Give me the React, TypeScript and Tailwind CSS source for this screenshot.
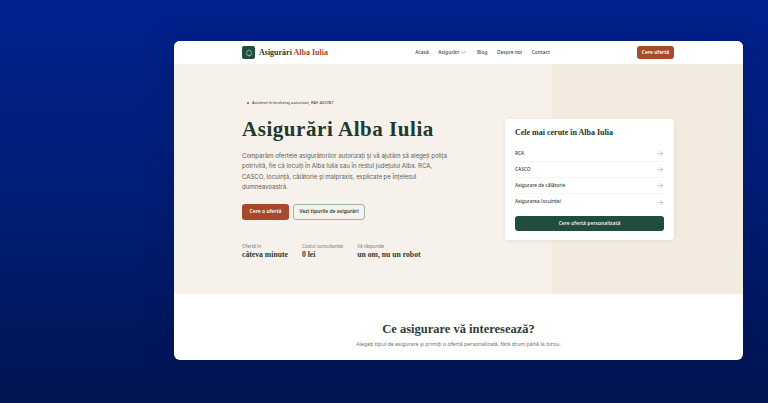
import { ArrowRight, ChevronDown, TreeDeciduous } from "lucide-react";

const serif = "font-['Liberation_Serif',serif]";

const navLinks = ["Acasă", "Blog", "Despre noi", "Contact"];
const popular = ["RCA", "CASCO", "Asigurare de călătorie", "Asigurarea locuinței"];
const stats = [
  { label: "Ofertă în", value: "câteva minute" },
  { label: "Costul consultanței", value: "0 lei" },
  { label: "Vă răspunde", value: "un om, nu un robot" },
];

function Nav() {
  return (
    <header className="flex h-[23px] shrink-0 items-center justify-between bg-white pl-[68px] pr-[69px]">
      <div className="flex items-center gap-[4px]">
        <div className="flex h-[13px] w-[13px] items-center justify-center rounded-[2px] bg-[#1f4d3f] text-white">
          <TreeDeciduous size={8} strokeWidth={1.5} />
        </div>
        <span className={`${serif} text-[8px] font-bold leading-none text-[#1f3a30]`}>
          Asigurări <span className="text-[#a8492b]">Alba Iulia</span>
        </span>
      </div>
      <nav className="flex items-center gap-[9.5px] text-[4.9px] font-medium text-[#3d4a44]">
        <span>{navLinks[0]}</span>
        <span className="flex items-center gap-[1px]">
          Asigurări <ChevronDown size={7} strokeWidth={1.6} />
        </span>
        {navLinks.slice(1).map((l) => (
          <span key={l}>{l}</span>
        ))}
      </nav>
      <button className="flex h-[13px] w-[37px] items-center justify-center rounded-[3px] bg-[#a8492b] text-[5px] font-semibold text-white">
        Cere ofertă
      </button>
    </header>
  );
}

function Hero() {
  return (
    <section className="flex h-[230px] shrink-0 items-start justify-between bg-[linear-gradient(to_right,#f6f1ea_0,#f6f1ea_378px,#f2ebe0_378px)] pl-[68px] pr-[69px] pt-[36px]">
      <div className="w-[210px]">
        <div className="flex items-center gap-[3px] pl-[5px] text-[4.1px] font-medium leading-[6px] text-[#5a4a44]">
          <span className="h-[2px] w-[2px] rounded-full bg-[#a8492b]" />
          Asistent în brokeraj autorizat, RAF 402287
        </div>
        <h1 className={`${serif} mt-[11px] whitespace-nowrap text-[21px] font-bold leading-[24px] tracking-[0.55px] text-[#1c3a2f]`}>
          Asigurări Alba Iulia
        </h1>
        <p className="mt-[10px] w-[206px] font-['Inter',sans-serif] text-[6.05px] leading-[10.4px] text-[#59635e]">
          Comparăm ofertele asigurătorilor autorizați și vă ajutăm să alegeți polița potrivită, fie că locuiți în Alba Iulia sau în restul județului Alba. RCA, CASCO, locuință, călătorie și malpraxis, explicate pe înțelesul dumneavoastră.
        </p>
        <div className="mt-[11px] flex gap-[4px] text-[5px] font-semibold">
          <button className="flex h-[16px] w-[47px] items-center justify-center rounded-[3px] bg-[#a8492b] text-white">
            Cere o ofertă
          </button>
          <button className="flex h-[16px] w-[72px] items-center justify-center rounded-[3px] border border-[#9fb3a9] text-[#2b4238]">
            Vezi tipurile de asigurări
          </button>
        </div>
        <div className="mt-[23px] flex gap-[14px]">
          {stats.map((s) => (
            <div key={s.label}>
              <div className="text-[4.6px] leading-[6px] text-[#78807c]">{s.label}</div>
              <div className={`${serif} mt-[1px] text-[7.7px] font-bold leading-[9px] text-[#2b3d35]`}>{s.value}</div>
            </div>
          ))}
        </div>
      </div>
      <aside className="mt-[19px] w-[169px] rounded-[3px] bg-white px-[10px] pb-[9px] pt-[9px] shadow-[0_1px_4px_rgba(60,40,20,0.08)]">
        <h2 className={`${serif} text-[8px] font-bold leading-[10px] text-[#1f2f28]`}>Cele mai cerute în Alba Iulia</h2>
        <ul className="mt-[8px]">
          {popular.map((p) => (
            <li
              key={p}
              className="flex h-[16px] items-center justify-between border-b border-[#f8f6f2] text-[4.8px] font-medium text-[#36423c] last:border-b-0"
            >
              {p}
              <ArrowRight size={7} strokeWidth={1.1} className="text-[#5f6965]" />
            </li>
          ))}
        </ul>
        <button className="mt-[6px] flex h-[15px] w-full items-center justify-center rounded-[3px] bg-[#1f4d3f] text-[5px] font-semibold text-[#eaf1ed]">
          Cere ofertă personalizată
        </button>
      </aside>
    </section>
  );
}

export default function App() {
  return (
    <div className="flex h-[403px] w-[768px] items-start overflow-hidden bg-[linear-gradient(to_bottom,#00228f_0%,#001f78_45%,#021452_100%)] pl-[174px] pt-[41px] font-['Noto_Sans','Inter',sans-serif]">
      <main className="flex h-[319px] w-[569px] flex-col overflow-hidden rounded-[6px] bg-white shadow-[0_0_30px_rgba(0,10,60,0.3)]">
        <Nav />
        <Hero />
        <section className="flex flex-col items-center pt-[27px]">
          <h2 className={`${serif} text-[12.5px] font-bold leading-[16px] text-[#2a3d35]`}>Ce asigurare vă interesează?</h2>
          <p className="mt-[3px] text-[5.3px] leading-[8px] text-[#6b726e]">
            Alegeți tipul de asigurare și primiți o ofertă personalizată, fără drum până la birou.
          </p>
        </section>
      </main>
    </div>
  );
}
